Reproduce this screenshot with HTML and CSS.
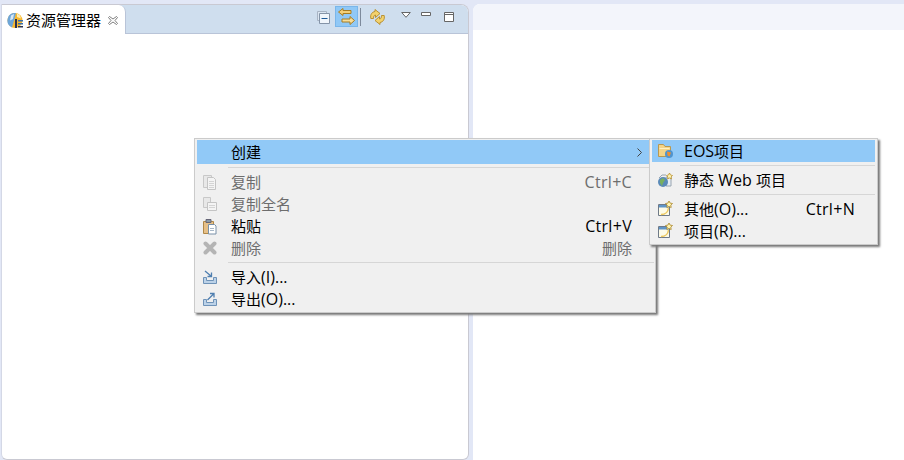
FILE: index.html
```html
<!DOCTYPE html>
<html lang="zh">
<head>
<meta charset="utf-8">
<title>资源管理器</title>
<link rel="stylesheet" href="styles.css">
</head>
<body>
<svg class="defs" width="0" height="0" aria-hidden="true">
  <symbol id="newwin" viewBox="0 0 16 16">
    <path d="M1.500 3.500h11v11h-11z" fill="#fdfbe8" stroke="#6f7a88"/>
    <path d="M2 4h10v2.500H2z" fill="#5f95c8"/>
    <path d="M4 13.500c4 0 7-2.500 7.500-6.500" fill="none" stroke="#ecc860" stroke-width="1.500"/>
    <path d="M12 0l1.100 2.100 2.400.4-1.700 1.600.4 2.400-2.200-1-2.200 1 .4-2.400-1.700-1.600 2.400-.4z" fill="#fff4b0" stroke="#a88428" stroke-width=".8"/>
  </symbol>
</svg>
<main class="workbench">
  <section class="panel left">
    <header class="head">
      <div class="tab">
        <svg class="ico" width="16" height="17" viewBox="0 0 16 17">
          <circle cx="8" cy="8.500" r="7.500" fill="#f8b830"/>
          <path d="M8 1A7.500 7.500 0 0 0 5 15.400L7 8.500 9 1.100z" fill="#6ea6d8"/>
          <path d="M4 3.500l3-1.500-1 5-3 1.500z" fill="#d8e8f6"/>
          <path d="M10 1.500l3 2 1 3-4-1.500z" fill="#ffeeb0"/>
          <path d="M8 7h2v9H8z" fill="#2c3450"/>
          <path d="M11 8h5v1.500h-5zM11 11h5v1.500h-5z" fill="#3a6ea8"/>
          <path d="M11 14h5v1.500h-5z" fill="#2c3450"/>
        </svg>
        <span class="tab-label">资源管理器</span>
        <svg class="tab-close" width="10" height="9" viewBox="0 0 10 9"><path d="M.5 1.500l1-1L5 3l3.500-2.500 1 1L7 4.500l2.500 3-1 1L5 6 1.500 8.500l-1-1L3 4.500z" fill="#fff" stroke="#707070" stroke-width=".9"/></svg>
      </div>
      <div class="tools">
        <svg class="t-collapse" width="13" height="13" viewBox="0 0 13 13"><path d="M.5.500h9v9h-9z" fill="#dbe6f2" stroke="#a8b4c4"/><path d="M2.500 2.500h10v10h-10z" fill="#f0f6fc" stroke="#8494a8"/><path d="M4.500 7.500h6" stroke="#1e5a98" stroke-width="1.200"/></svg>
        <div class="t-active">
          <svg width="17" height="17" viewBox="0 0 17 17"><path d="M5 .5L.5 4 5 7.500v-2h8v-3H5z" fill="#f3cf78" stroke="#a87c20"/><path d="M12 8.500l4.500 4-4.500 4V14H4v-3h8z" fill="#f7dd98" stroke="#a87c20"/></svg>
        </div>
        <span class="t-sep"></span>
        <svg class="t-sync" width="15" height="16" viewBox="0 0 15 16"><path d="M.8 9.500C0 5.500 2 3 5 2.500V.5l5 4-4.500 4V6C4 6 3.500 7.500 3.500 9.500z" fill="#f3d26e" stroke="#b48a28" stroke-width=".9"/><path d="M14.200 6.500c.8 4-1.200 6.500-4.200 7v2l-5-4 4.500-4V10c1.500 0 2-1.500 2-3.500z" fill="#f3d26e" stroke="#b48a28" stroke-width=".9"/></svg>
        <svg class="t-menu" width="10" height="6" viewBox="0 0 10 6"><path d="M.7.500h8.600L5 5.300z" fill="#fff" stroke="#666"/></svg>
        <svg class="t-min" width="10" height="5" viewBox="0 0 10 5"><path d="M.5.500h9v3h-9z" fill="#fff" stroke="#666"/></svg>
        <svg class="t-max" width="10" height="10" viewBox="0 0 10 10"><path d="M.5.500h9v9h-9z" fill="#fff" stroke="#666"/><path d="M0 2.500h10" stroke="#666"/></svg>
      </div>
    </header>
  </section>
  <section class="panel right">
    <header class="head-right"></header>
  </section>
</main>

<nav class="menu main-menu">
  <div class="row tall active"><span class="icon"></span><span class="label">创建</span><svg class="arrow" width="5" height="9" viewBox="0 0 5 9"><path d="M.5.500l4 4-4 4" fill="none" stroke="#444"/></svg></div>
  <div class="sep"></div>
  <div class="row off"><span class="icon"><svg width="16" height="16" viewBox="0 0 16 16"><path d="M1.500 1.500h8v12h-8z" fill="#e8e8e8" stroke="#c8c8c8"/><path d="M5.500 3.500h6l2 2v10h-8z" fill="#f4f4f4" stroke="#c4c4c4"/><path d="M7 7.500h5M7 9.500h5M7 11.500h5M7 13.500h5" stroke="#d4d4d4"/></svg></span><span class="label">复制</span><span class="key">Ctrl+C</span></div>
  <div class="row off"><span class="icon"><svg width="16" height="16" viewBox="0 0 16 16"><path d="M1.500 1.500h7v10h-7z" fill="#e8e8e8" stroke="#c8c8c8"/><path d="M5.500 6.500h9v8h-9z" fill="#f4f4f4" stroke="#c4c4c4"/><path d="M7 9.500h6M7 11.500h6" stroke="#d4d4d4"/></svg></span><span class="label">复制全名</span></div>
  <div class="row"><span class="icon"><svg width="16" height="17" viewBox="0 0 16 17"><path d="M1.500 3.500h10v12h-10z" fill="#e6c088" stroke="#b08848"/><path d="M4 1.500h5v3H4z" fill="#8a9aa8" stroke="#667"/><path d="M6.500 6.500h6l1.500 1.500v8h-7.500z" fill="#fff" stroke="#7890a8"/><path d="M8 10.500h4M8 12.500h4" stroke="#a8b8c8"/></svg></span><span class="label">粘贴</span><span class="key">Ctrl+V</span></div>
  <div class="row off"><span class="icon"><svg width="14" height="14" viewBox="0 0 14 14"><path d="M2.500 2.500l9 9M11.500 2.500l-9 9" stroke="#b4b4b4" stroke-width="4" stroke-linecap="round"/></svg></span><span class="label">删除</span><span class="key cjk">删除</span></div>
  <div class="sep"></div>
  <div class="row"><span class="icon"><svg width="16" height="14" viewBox="0 0 16 14"><path d="M1.500 7.500h3v3h7v-3h3v6h-13z" fill="#bcd2e8" stroke="#6f93b8"/><path d="M3 1l6 5M9.500 2.500V6.500H5.500" fill="none" stroke="#4f7fb0" stroke-width="1.300"/></svg></span><span class="label mix">导入<span class="lat">(I)...</span></span></div>
  <div class="row"><span class="icon"><svg width="16" height="14" viewBox="0 0 16 14"><path d="M1.500 7.500h3v3h7v-3h3v6h-13z" fill="#bcd2e8" stroke="#6f93b8"/><path d="M5.500 8l6-6M8 1.500h4v4" fill="none" stroke="#4f7fb0" stroke-width="1.300"/></svg></span><span class="label mix">导出<span class="lat">(O)...</span></span></div>
</nav>

<nav class="menu sub-menu">
  <div class="row active"><span class="icon"><svg width="17" height="16" viewBox="0 0 17 16"><path d="M1.500 3V1.500h5l1.500 2h5.500v10h-12z" fill="#f4d488" stroke="#b89850"/><path d="M2.500 5.500h10" stroke="#fff0c0"/><circle cx="12" cy="11" r="4" fill="#4f94d0"/><path d="M10 8.500l4 1-1.500 4-2-1z" fill="#f09030"/></svg></span><span class="label mix"><span class="lat">EOS</span>项目</span></div>
  <div class="sep"></div>
  <div class="row"><span class="icon"><svg width="16" height="16" viewBox="0 0 16 16"><path d="M2 6l3-3h4" fill="none" stroke="#98a4b0"/><path d="M9 5h5v9H9z" fill="#e8eef4" stroke="#98a4b0"/><circle cx="6" cy="10" r="5" fill="#5a8ab8"/><path d="M3 8l3-2 2 2-2 3-1 3-2-3z" fill="#78b060"/><path d="M12.500 1l1 2 2 .5-1.500 1.500.5 2-2-1-2 1 .5-2L9.500 3.500l2-.5z" fill="#fff4b0" stroke="#b89030" stroke-width=".8"/></svg></span><span class="label mix">静态<span class="lat"> Web </span>项目</span></div>
  <div class="sep"></div>
  <div class="row"><span class="icon"><svg width="16" height="16"><use href="#newwin"/></svg></span><span class="label mix">其他<span class="lat">(O)...</span></span><span class="key">Ctrl+N</span></div>
  <div class="row"><span class="icon"><svg width="16" height="16"><use href="#newwin"/></svg></span><span class="label mix">项目<span class="lat">(R)...</span></span></div>
</nav>
</body>
</html>
```
FILE: styles.css
```css
* { box-sizing: border-box; }
html, body { margin: 0; height: 100%; }
body {
  background: #e2e7f6;
  font-family: "Open Sans", "Noto Sans CJK SC", sans-serif;
  font-size: 15px;
  color: #000;
  overflow: hidden;
  position: relative;
}
.defs { position: absolute; }
.workbench {
  display: flex;
  height: 460px;
  padding: 4px 0 0 1px;
  gap: 4px;
}
.left {
  width: 468px;
  height: 456px;
  background: #fff;
  border: 1px solid #c9c9d2;
  border-left-color: #d4d8e6;
  border-radius: 0 8px 6px 6px;
  overflow: hidden;
}
.right {
  flex: 1;
  background: #fff;
  border-radius: 7px 0 0 0;
  overflow: hidden;
}
.head-right { height: 26px; background: #f3f5fb; }
.head {
  height: 29px;
  display: flex;
  background: #cfdeee;
  border-bottom: 1px solid #b9c4d8;
}
.tab {
  width: 124px;
  height: 29px;
  background: #fff;
  border-right: 1px solid #b9c4d8;
  border-radius: 0 7px 0 0;
  display: flex;
  align-items: center;
  padding: 1px 0 0 5px;
}
.tab-label {
  margin-left: 3px;
  line-height: 20px;
  white-space: nowrap;
}
.tab-close { margin-left: 7px; flex: none; }
.ico { flex: none; }
.tools {
  display: flex;
  align-items: center;
  margin-left: 191px;
  height: 23px;
}
.tools svg { flex: none; display: block; }
.t-collapse { margin-top: 2px; }
.t-active {
  width: 23px;
  height: 21px;
  margin-left: 5px;
  background: #90c8f6;
  border: 1px solid #7ab6ea;
  display: flex;
  align-items: center;
  justify-content: center;
}
.t-sep { width: 1px; height: 18px; background: #7d8a9c; margin-left: 2px; margin-top: 1px; }
.t-sync { margin-left: 9px; margin-top: 1px; }
.t-menu { margin-left: 16px; margin-bottom: 4px; }
.t-min { margin-left: 10px; margin-bottom: 5px; }
.t-max { margin-left: 13px; margin-top: 1px; }

.menu {
  position: absolute;
  top: 138px;
  background: #f0f0f0;
  border: 1px solid #cbcbcb;
  box-shadow: 2px 2px 2px #777;
}
.main-menu { left: 194px; width: 462px; height: 175px; padding: 1px 1px 0 2px; }
.sub-menu { left: 649px; width: 229px; height: 107px; padding: 1px 2px 0 2px; }
.row {
  height: 22px;
  display: flex;
  align-items: center;
  white-space: nowrap;
}
.tall { height: 24px; }
.active { background: #91c9f7; }
.off { color: #6d6d6d; }
.icon {
  flex: none;
  width: 26px;
  display: flex;
  justify-content: center;
  align-items: center;
}
.icon svg { display: block; }
.label { padding-bottom: 2px; }
.label.mix { padding-bottom: 0; }
.main-menu .label { margin-left: 8px; }
.sub-menu .label { margin-left: 6px; }
.lat, .key { font-size: 16px; }
.key { margin-left: auto; letter-spacing: .3px; }
.key.cjk { font-size: 15px; letter-spacing: 0; padding-bottom: 2px; }
.main-menu .key { margin-right: 22px; }
.sub-menu .key { margin-right: 20px; }
.arrow {
  margin-left: auto;
  margin-right: 12px;
  flex: none;
}
.sep {
  height: 7px;
  padding: 3px 0;
  background-clip: content-box;
  background-color: #d6d6d6;
}
.main-menu .sep { margin-left: 31px; }
.sub-menu .sep { margin-left: 28px; }
```
